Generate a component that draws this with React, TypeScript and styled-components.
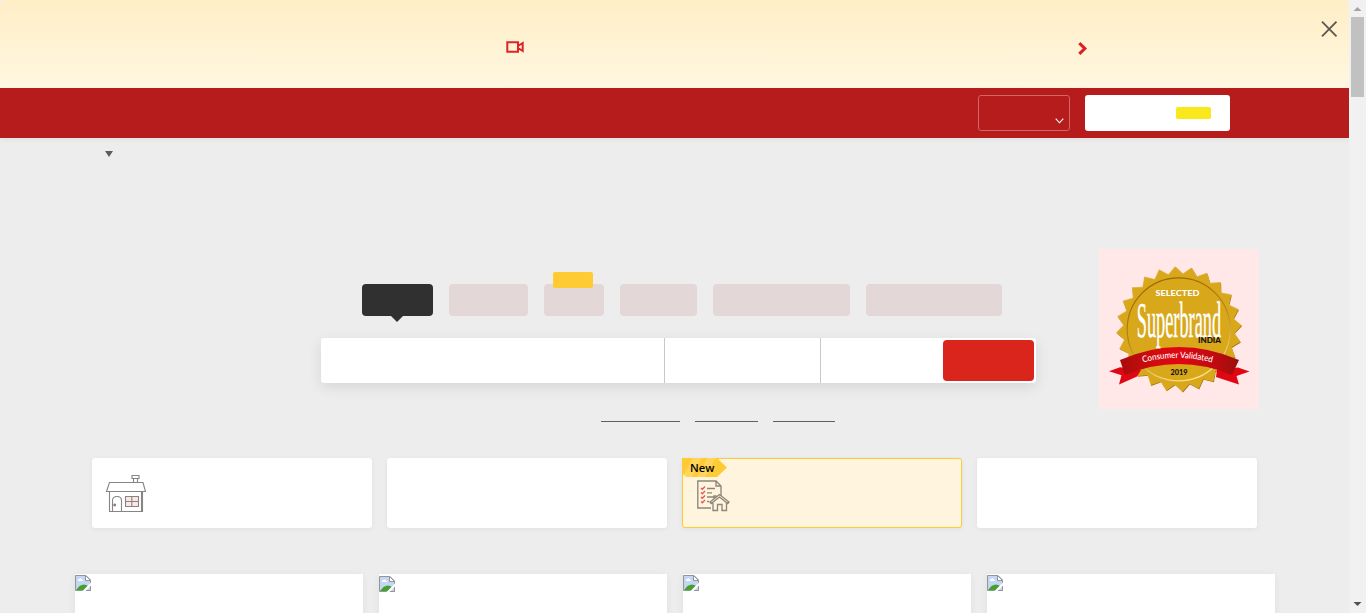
import React from "react";
import styled, { createGlobalStyle } from "styled-components";

const GlobalStyle = createGlobalStyle`
  * { box-sizing: border-box; }
  html, body { margin: 0; padding: 0; overflow: hidden; background: #ededed; }
  body { font-family: "Open Sans", "Liberation Sans", sans-serif; }
  svg { display: block; }
`;

const Screen = styled.div`
  display: flex;
  width: 1366px;
  height: 613px;
  overflow: hidden;
  background: #f1f1f1;
`;

const Page = styled.div`
  width: 1349px;
  height: 613px;
  overflow: hidden;
  display: flex;
  flex-direction: column;
  background: linear-gradient(#f1f1f1 0 20px, #ededed 20px);
`;

const Promo = styled.section`
  height: 88px;
  flex: none;
  display: flex;
  align-items: flex-start;
  padding: 0 11px 0 506px;
  border-radius: 5px 5px 0 0;
  background: linear-gradient(#ffeec6, #fff7e1);
`;

const CameraSlot = styled.div`
  margin-top: 41px;
`;
const ArrowSlot = styled.div`
  margin: 42px 0 0 554px;
`;
const CloseButton = styled.button`
  margin: 21px 0 0 auto;
  padding: 0;
  border: 0;
  background: none;
`;

const Header = styled.header`
  height: 50px;
  flex: none;
  display: flex;
  gap: 15px;
  padding: 7px 119px 0 0;
  justify-content: flex-end;
  background: #b51c1b;
  box-shadow: 0 2px 6px rgba(0, 0, 0, 0.05);
  position: relative;
`;

const LoginButton = styled.div`
  width: 92px;
  height: 36px;
  border: 1px solid #cf6767;
  border-radius: 3px;
  display: flex;
  justify-content: flex-end;
  align-items: flex-end;
  padding: 0 5px 6px 0;
`;

const PostButton = styled.div`
  width: 145px;
  height: 36px;
  border-radius: 3px;
  background: #fff;
  display: flex;
  justify-content: flex-end;
  padding: 12px 19px 0 0;
`;

const FreeTag = styled.span`
  width: 35px;
  height: 12px;
  border-radius: 2px;
  background: #f9e81c;
`;

const CityBar = styled.div`
  height: 111px;
  flex: none;
  padding: 13px 0 0 105px;
`;

const Hero = styled.section`
  height: 209px;
  flex: none;
  display: flex;
`;

const SearchArea = styled.div`
  width: 715px;
  margin-left: 321px;
  padding-top: 35px;
`;

const Tabs = styled.nav`
  display: flex;
  gap: 16px;
  padding-left: 41px;
`;

const Tab = styled.div<{ $width: number; $active?: boolean }>`
  position: relative;
  width: ${(p) => p.$width}px;
  height: 32px;
  border-radius: 4px;
  background: ${(p) => (p.$active ? "#303030" : "#e3d7d7")};
`;

const TabPointer = styled.i`
  position: absolute;
  left: 28.5px;
  top: 32px;
  border: 6px solid transparent;
  border-top-color: #303030;
  border-bottom: 0;
`;

const TabBadge = styled.i`
  position: absolute;
  left: 9px;
  top: -12px;
  width: 40px;
  height: 16px;
  border-radius: 2px;
  background: #ffcb34;
`;

const SearchBox = styled.div`
  display: flex;
  height: 45px;
  margin-top: 22px;
  padding-right: 2px;
  border-radius: 3px;
  background: #fff;
  box-shadow: 0 4px 14px rgba(0, 0, 0, 0.1);
`;

const Field = styled.div<{ $width: number; $divided?: boolean }>`
  width: ${(p) => p.$width}px;
  border-right: ${(p) => (p.$divided ? "1px solid #c8c8c8" : "0")};
`;

const SearchButton = styled.div`
  width: 91px;
  height: 41px;
  margin: 2px 0;
  border-radius: 4px;
  background: #da251c;
`;

const Links = styled.div`
  display: flex;
  gap: 15px;
  padding: 38px 0 0 280px;
`;

const LinkLine = styled.span<{ $width: number }>`
  width: ${(p) => p.$width}px;
  height: 1px;
  background: #606060;
`;

const Award = styled.div`
  width: 160px;
  height: 160px;
  margin-left: 63px;
  background: #ffe8e7;
`;

const Cards = styled.section`
  display: flex;
  flex: none;
  gap: 15px;
  padding-left: 92px;
`;

const Card = styled.article<{ $highlight?: boolean }>`
  position: relative;
  width: 280px;
  height: 70px;
  border-radius: 3px;
  border: ${(p) => (p.$highlight ? "1px solid #ffcb34" : "0")};
  background: ${(p) => (p.$highlight ? "#fff5df" : "#fff")};
  box-shadow: 0 1px 5px rgba(0, 0, 0, 0.06);
  padding: ${(p) => (p.$highlight ? "21px 0 0 14px" : "16px 0 0 13px")};
`;

const NewBadge = styled.div`
  position: absolute;
  left: -1px;
  top: -1px;
  width: 46px;
  height: 19px;
  padding-left: 8px;
  font: 600 11.2px/19px "Open Sans", sans-serif;
  color: #000;
  clip-path: polygon(0 0, 35px 0, 45px 9.5px, 35px 100%, 4px 100%, 0 15px);
  background: linear-gradient(118deg, #ffcb34 0 9px, #ffd65b 10px 17px, #ffcb34 18px 22px, #ffd65b 23px 29px, #ffcb34 30px);
`;

const Tiles = styled.section`
  display: flex;
  flex: none;
  gap: 16px;
  padding: 46px 0 0 75px;
`;

const Tile = styled.article<{ $offset: number }>`
  width: 288px;
  height: 60px;
  padding-top: ${(p) => p.$offset}px;
  background: #fff;
  box-shadow: 0 1px 8px rgba(0, 0, 0, 0.06);
`;

const Scrollbar = styled.aside`
  width: 17px;
  height: 613px;
  display: flex;
  flex-direction: column;
  align-items: center;
  background: #f1f1f1;
`;
const ScrollButton = styled.div`
  height: 17px;
  width: 17px;
  flex: none;
`;
const Thumb = styled.div`
  width: 13px;
  height: 80px;
  background: #c1c1c1;
`;
const Track = styled.div`
  flex: 1;
`;

function sealPoints(outer: number, inner: number) {
  return Array.from({ length: 48 }, (_, i) => {
    const a = ((-93.4 + i * 7.5) * Math.PI) / 180;
    const r = i % 2 ? inner : outer;
    return `${(80 + r * Math.cos(a)).toFixed(2)},${(80.3 + r * Math.sin(a)).toFixed(2)}`;
  }).join(" ");
}

function SuperbrandSeal() {
  return (
    <svg width="160" height="160" viewBox="0 0 160 160">
      <defs>
        <linearGradient id="ribbon" x1="0" x2="1">
          <stop offset="0" stopColor="#a60d0b" />
          <stop offset="0.3" stopColor="#d40b0f" />
          <stop offset="0.5" stopColor="#df0612" />
          <stop offset="0.8" stopColor="#c00b10" />
          <stop offset="1" stopColor="#980f0a" />
        </linearGradient>
        <linearGradient id="ring" x1="0.25" x2="0.6" y1="0" y2="1">
          <stop offset="0" stopColor="#946500" />
          <stop offset="0.5" stopColor="#b98718" />
          <stop offset="1" stopColor="#ffe48c" />
        </linearGradient>
        <path id="ribbonText" d="M44 113.6 Q79 104 116 114.2" />
      </defs>
      <polygon points={sealPoints(62.8, 55.6)} fill="#a8760c" transform="translate(0.4 0.5)" />
      <polygon points={sealPoints(62.8, 55.6)} fill="#e2b545" transform="translate(-0.2 -0.4)" />
      <polygon points={sealPoints(62, 55)} fill="#d8a71a" />
      <circle cx="79.7" cy="80.3" r="51.5" fill="none" stroke="url(#ring)" strokeWidth="1.2" />
      <path d="M10 122.3 L21 118.3 L42 121 L38 127.5 L20 135.5 L22.5 126.3 Z" fill="#e00613" />
      <path d="M150.5 122.5 L139 118.5 L118 121 L117 128 L140 135.5 L137.5 127 Z" fill="#e00613" />
      <path d="M21 111 Q80 85 140 111 L133 126 Q80 104 26 126 Z" fill="url(#ribbon)" />
      <text x="56.5" y="46.6" fill="#fff" fontFamily="Lato, sans-serif" fontWeight="900" fontSize="8" textLength="44" lengthAdjust="spacingAndGlyphs">SELECTED</text>
      <text transform="translate(37.7 88.2) scale(0.4 1)" fill="#fff" stroke="#fff" strokeWidth="0.5" fontFamily="Liberation Serif, serif" fontSize="50" textLength="211" lengthAdjust="spacingAndGlyphs">Superbrand</text>
      <text x="99" y="94" fill="#111" fontFamily="Lato, sans-serif" fontWeight="900" fontSize="7.8" textLength="23" lengthAdjust="spacingAndGlyphs">INDIA</text>
      <text fill="#fff" fontFamily="Lato, sans-serif" fontWeight="500" fontSize="8.8">
        <textPath href="#ribbonText" textLength="70" lengthAdjust="spacingAndGlyphs">Consumer Validated</textPath>
      </text>
      <text x="71.5" y="125.6" fill="#111" fontFamily="Lato, sans-serif" fontWeight="900" fontSize="8" textLength="17" lengthAdjust="spacingAndGlyphs">2019</text>
    </svg>
  );
}

const HouseIcon = () => (
  <svg width="42" height="40" viewBox="0 0 42 40" fill="none" stroke="#858585" strokeWidth="1.1">
    <path d="M4.5 8.5H38L40.5 17.5H1.5Z" />
    <path d="M4.5 17.5V37.5H37.5V17.5M36.5 17.5V37.5" />
    <path d="M27 1.5H34V4.5H27ZM28.5 4.5V8.5M32.5 4.5V8.5" />
    <path d="M7.5 37.5V26.5Q7.5 22.5 12 22.5T16.5 26.5V37.5" />
    <circle cx="9.7" cy="31" r="0.9" fill="#555" />
    <path d="M20.5 22.5H33.5V32.5H20.5ZM26.8 22.5V32.5M20.5 27.5H33.5" fill="#fde6e3" />
  </svg>
);

const ChecklistIcon = () => (
  <svg width="34" height="32" viewBox="0 0 34 32" fill="none" stroke="#8d8578" strokeWidth="1.35">
    <path d="M14 28H.8V1H19L24 6V16M19 1V6H24" />
    <path d="M10 8.5H18M10 12.8H15M10 17H17M10 21.5H12" />
    <path d="M4 8L5.3 9.3L8 6.5M4 12.5L5.3 13.8L8 11M4 17L5.3 18.3L8 15.5M4 21.5L5.3 22.8L8 20" stroke="#e95558" />
    <path d="M13 22L22.5 14.5L32 22L30.8 23.5L22.5 17L14.2 23.5ZM16 23V30.5H20.5V24.5H25V30.5H29.5V23M17 18.5V16H19.5" fill="#fff5df" />
  </svg>
);

const BrokenImage = () => (
  <svg width="16" height="16" viewBox="0 0 16 16">
    <path d="M.5.5H11L15.5 5V15.5H.5Z" fill="#c5d6f5" stroke="#959595" />
    <path d="M3 5.5Q3 3.5 5 3.8Q6.5 2.5 7 5Q8.5 4.5 8.5 6H2.5Z" fill="#fff" />
    <path d="M1 15L4.5 11Q9 8 13 11L10 15Z" fill="#43a22c" />
    <path d="M7.5 16L16 7.5V10.5L10.5 16Z" fill="#fff" />
    <path d="M10.5 .5V5.5H15.5Z" fill="#fff" stroke="#959595" />
    <path d="M11 15.5H15.5V11.5" fill="none" stroke="#959595" />
  </svg>
);

export default function App() {
  return (
    <>
      <GlobalStyle />
      <Screen>
        <Page>
          <Promo>
            <CameraSlot>
              <svg width="18" height="12" fill="none" stroke="#dc2429" strokeWidth="2">
                <path d="M1.3 1.3H12V10.7H1.3ZM12 5L16.7 2V10L12 7" />
              </svg>
            </CameraSlot>
            <ArrowSlot>
              <svg width="10" height="13" fill="none" stroke="#dc2027" strokeWidth="3.1">
                <path d="M1.3 1.2L6.8 6.5L1.3 11.8" />
              </svg>
            </ArrowSlot>
            <CloseButton aria-label="Close">
              <svg width="17" height="16" fill="none" stroke="#5e5a52" strokeWidth="1.9">
                <path d="M1 .7L15.5 15.3M15.5 .7L1 15.3" />
              </svg>
            </CloseButton>
          </Promo>
          <Header>
            <LoginButton>
              <svg width="9" height="6" fill="none" stroke="#fff" strokeWidth="1.1">
                <path d="M.7 .7L4.5 4.8L8.3 .7" />
              </svg>
            </LoginButton>
            <PostButton>
              <FreeTag />
            </PostButton>
          </Header>
          <CityBar>
            <svg width="8" height="6">
              <path d="M0 0H8L4 6Z" fill="#5d5d5d" />
            </svg>
          </CityBar>
          <Hero>
            <SearchArea>
              <Tabs>
                <Tab $width={71} $active><TabPointer /></Tab>
                <Tab $width={79} />
                <Tab $width={60}><TabBadge /></Tab>
                <Tab $width={77} />
                <Tab $width={137} />
                <Tab $width={136} />
              </Tabs>
              <SearchBox>
                <Field $width={344} $divided />
                <Field $width={156} $divided />
                <Field $width={122} />
                <SearchButton />
              </SearchBox>
              <Links>
                <LinkLine $width={79} />
                <LinkLine $width={63} />
                <LinkLine $width={62} />
              </Links>
            </SearchArea>
            <Award><SuperbrandSeal /></Award>
          </Hero>
          <Cards>
            <Card><HouseIcon /></Card>
            <Card />
            <Card $highlight>
              <NewBadge>New</NewBadge>
              <ChecklistIcon />
            </Card>
            <Card />
          </Cards>
          <Tiles>
            {[1, 2, 1, 1].map((offset, i) => (
              <Tile key={i} $offset={offset}><BrokenImage /></Tile>
            ))}
          </Tiles>
        </Page>
        <Scrollbar>
          <ScrollButton>
            <svg width="17" height="17"><path d="M4.5 11H12.5L8.5 7Z" fill="#a3a3a3" /></svg>
          </ScrollButton>
          <Thumb />
          <Track />
          <ScrollButton>
            <svg width="17" height="17"><path d="M4.5 6H12.5L8.5 10Z" fill="#505050" /></svg>
          </ScrollButton>
        </Scrollbar>
      </Screen>
    </>
  );
}
